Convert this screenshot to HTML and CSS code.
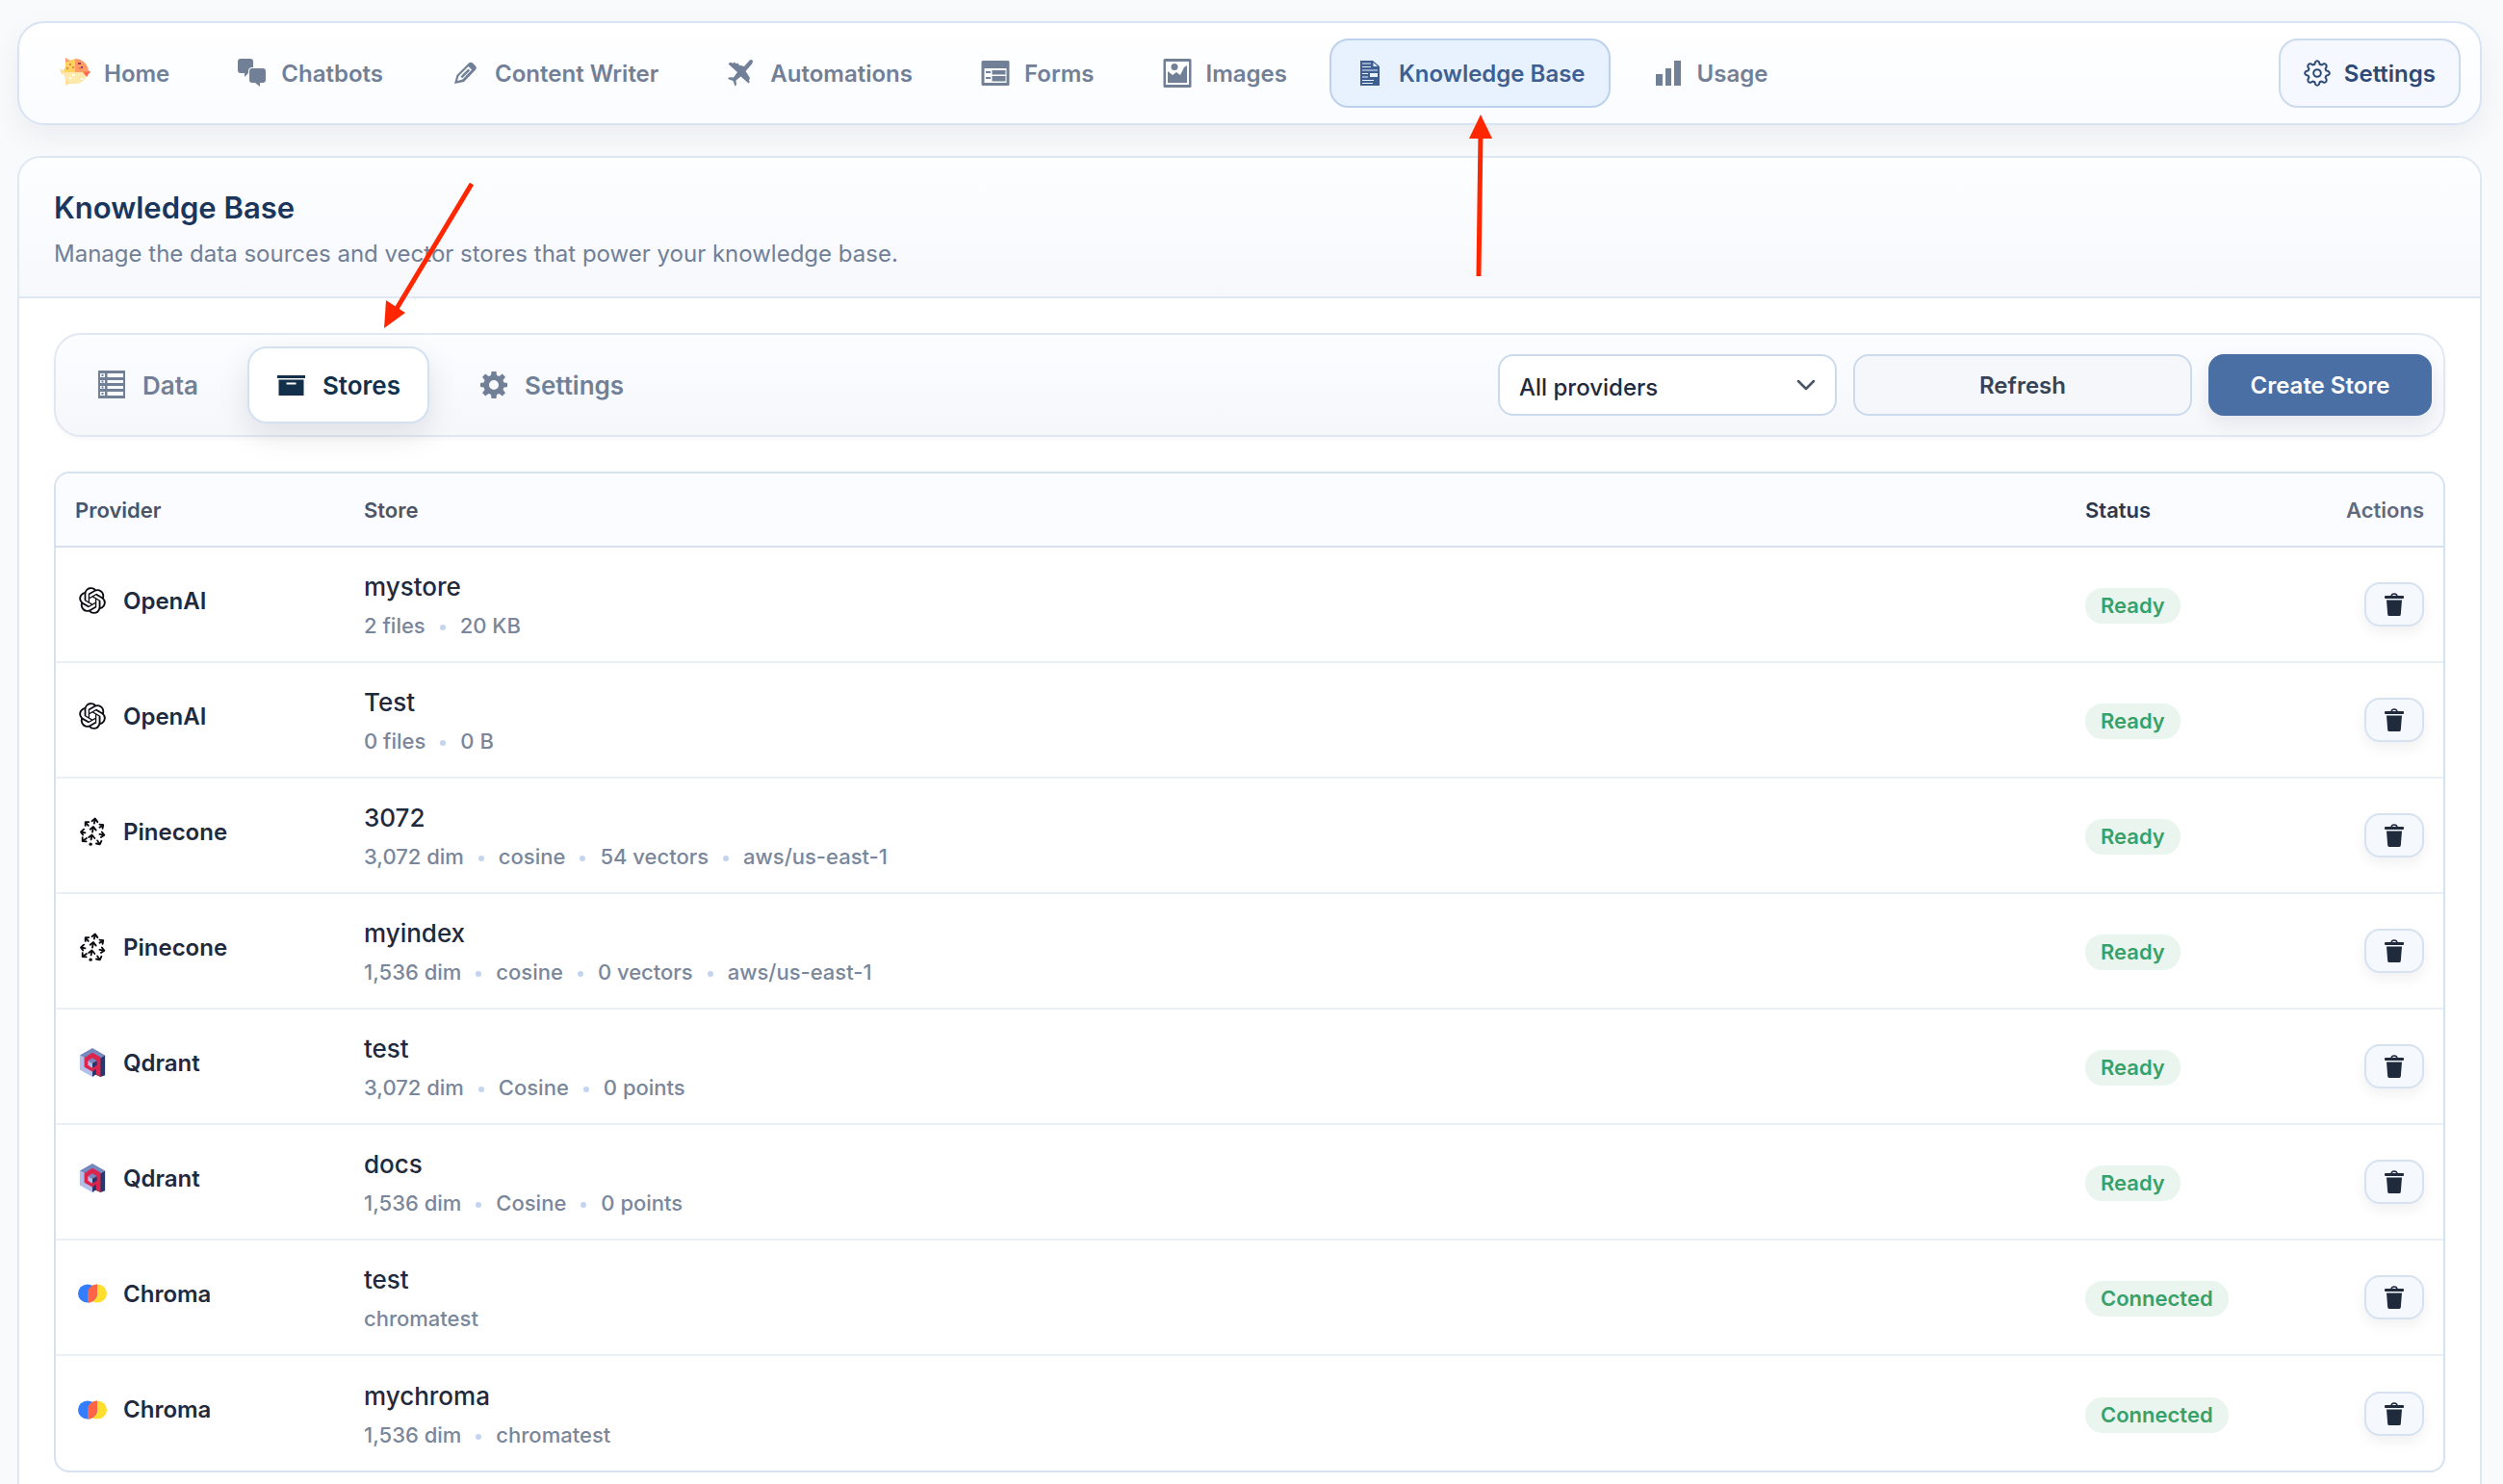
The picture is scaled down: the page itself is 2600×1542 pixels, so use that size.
FILE: index.html
```html
<!DOCTYPE html>
<html lang="en">
<head>
  <meta charset="UTF-8">
  <meta name="viewport" content="width=device-width, initial-scale=1.0">
  <title>Knowledge Base</title>
  <link rel="stylesheet" href="styles.css">
</head>
<body>
  <!-- shared icons -->
  <svg width="0" height="0" class="sprite" aria-hidden="true">
    <symbol id="i-openai" viewBox="-1 -1 26 26">
      <path d="M22.28 9.82a5.98 5.98 0 0 0-.52-4.91 6.05 6.05 0 0 0-6.51-2.9A6.07 6.07 0 0 0 4.98 4.18a5.98 5.98 0 0 0-4 2.9 6.05 6.05 0 0 0 .74 7.1 5.98 5.98 0 0 0 .51 4.91 6.05 6.05 0 0 0 6.52 2.9A5.98 5.98 0 0 0 13.26 24a6.06 6.06 0 0 0 5.77-4.21 5.99 5.99 0 0 0 4-2.9 6.06 6.06 0 0 0-.75-7.07zm-9.02 12.61a4.48 4.48 0 0 1-2.88-1.04l.14-.08 4.78-2.76a.79.79 0 0 0 .39-.68v-6.74l2.02 1.17a.07.07 0 0 1 .04.05v5.58a4.5 4.5 0 0 1-4.49 4.5zM3.6 18.3a4.47 4.47 0 0 1-.53-3.01l.14.09 4.78 2.76a.77.77 0 0 0 .78 0l5.84-3.37v2.33a.08.08 0 0 1-.03.06L9.74 19.95a4.5 4.5 0 0 1-6.14-1.65zM2.34 7.9a4.49 4.49 0 0 1 2.37-1.97V11.6a.77.77 0 0 0 .39.68l5.81 3.35-2.02 1.17a.08.08 0 0 1-.07 0l-4.83-2.79A4.5 4.5 0 0 1 2.34 7.87zm16.6 3.86L13.1 8.36 15.12 7.2a.08.08 0 0 1 .07 0l4.83 2.79a4.49 4.49 0 0 1-.68 8.1v-5.68a.79.79 0 0 0-.4-.65zm2.01-3.02-.14-.09-4.77-2.78a.78.78 0 0 0-.79 0L9.41 9.23V6.9a.07.07 0 0 1 .03-.06l4.83-2.79a4.5 4.5 0 0 1 6.68 4.66zM8.31 12.86l-2.02-1.16a.08.08 0 0 1-.04-.06V6.07a4.5 4.5 0 0 1 7.38-3.45l-.14.08-4.78 2.76a.79.79 0 0 0-.39.68zm1.1-2.36L12 9l2.61 1.5v3L12 15l-2.6-1.5z"/>
    </symbol>
    <symbol id="i-pinecone" viewBox="0 0 28 32">
      <g fill="none" stroke="#0b0b12" stroke-width="2" stroke-linecap="round" stroke-linejoin="round">
        <path d="M16 7l1-5M13.5 4.5l3.5-2.8 2.7 3.8"/>
        <path d="M14 16.5l1-5M11.5 13.5l3.5-2.8 3 3.8"/>
        <path d="M12.5 25l1-5M10 22.5l3.5-2.8 3 3.8"/>
        <path d="M9.5 9.5l-3-3.5M10 5.5H6.2v4"/>
        <path d="M22 11.5l3.5-2.5M22 8.2l4 .6-.8 3.8"/>
        <path d="M6 17.5l-4.5-1M4.5 13.5l-3.3 3 2.3 3.3"/>
        <path d="M22 19l5 .8M24.5 16.5l2.7 3.5-3.7 2.5"/>
        <path d="M7.5 23.5l-4 3M3 22.5v4.2l4.2.3"/>
        <path d="M19.5 26l2.5 4M24 26.5l-1.8 3.7-4-.9"/>
      </g>
      <circle cx="12" cy="30" r="1.8" fill="#0b0b12"/>
    </symbol>
    <symbol id="i-qdrant" viewBox="0 0 28 32">
      <path fill="#7589be" d="M14 0l14 8-14 8L0 8z"/>
      <path fill="#b2bfe8" d="M0 8l14 8v16L0 24z"/>
      <path fill="#24386c" d="M28 8v22l-5 2-9-4V16z"/>
      <path fill="#dc244c" d="M14 5l9 5v22l-5-3v-6l-4 3-9-5V11z"/>
      <path fill="#7589be" d="M14 11l5 3-5 3-5-3z"/>
      <path fill="#b2bfe8" d="M9 14l5 3v5l-5-3z"/>
      <path fill="#24386c" d="M19 14v5l-5 3v-5z"/>
      <path fill="#24386c" d="M14 27l4-2v4l-4 3z"/>
    </symbol>
    <symbol id="i-chroma" viewBox="0 0 30 20">
      <ellipse cx="20" cy="10" rx="10" ry="9.6" fill="#ffde2d"/>
      <ellipse cx="10" cy="10" rx="10" ry="9.6" fill="#327eff"/>
      <path fill="#ff6446" d="M20 .4V10c0 5.3-4.500 9.600-10 9.600V10C10 4.700 14.500.4 20 .4z"/>
    </symbol>
    <symbol id="i-trash" viewBox="0 0 20 24">
      <path fill="none" stroke="currentColor" stroke-width="1.5" d="M7 4a3 3 0 0 1 6 0"/>
      <rect y="3" width="20" height="3" rx="1"/>
      <path d="M2 7.5h16L16.8 22.5a1.6 1.6 0 0 1-1.6 1.5H4.8a1.6 1.6 0 0 1-1.6-1.5z"/>
    </symbol>
  </svg>

  <nav class="navbar">
    <a href="#" class="nav-item">
      <svg class="icon" viewBox="0 0 32 32">
        <path fill="#ffd25e" d="M6 0l4 3 6-2 2 1v14H3l3-7z"/>
        <path fill="#ff9c66" d="M16 1c8 0 13 6 14 12l2 3H16z"/>
        <path fill="#ffe8ac" d="M3 15h25c0 7-5 12-11 12H6v-5z"/>
        <path fill="#ffdfa0" d="M0 11l5 3-3 4zM6 24l6 2-6 3z"/>
        <path fill="#ff6a4d" d="M24 15l8-1-4 6z"/>
        <path fill="#ff9a7a" d="M6 0l5 3-5 2z"/>
        <path fill="#8e3b70" d="M19 5h3v2h-3zM22 9h2v2h-2z"/>
        <path fill="#f0804c" d="M10 6h2v2h-2zM13 9h2v2h-2zM7 10h2v2H7zM20 10h2v2h-2z"/>
        <path fill="#fff" d="M13 17h3v2h-3zM10 20h2v2h-2zM22 21h2v2h-2z"/>
      </svg>
      Home
    </a>
    <a href="#" class="nav-item">
      <svg class="icon" viewBox="0 0 32 32">
        <path d="M4 1h10a3 3 0 0 1 3 3v6h-1a4 4 0 0 0-4 4v2l-4 4v-4H4a3 3 0 0 1-3-3V4a3 3 0 0 1 3-3z"/>
        <path d="M16 11h11a3 3 0 0 1 3 3v9a3 3 0 0 1-3 3h-3v4l-5-4h-3a3 3 0 0 1-3-3v-9a3 3 0 0 1 3-3z"/>
      </svg>
      Chatbots
    </a>
    <a href="#" class="nav-item">
      <svg class="icon" viewBox="0 0 32 32">
        <path fill-rule="evenodd" d="M19 5.500q2-1.500 4 0l3 3q1.500 2 0 4L14 25 4 27l2.500-9zM8.500 19l-1.500 5 5.500-1.500L22 12.500 18.500 9zM10.500 19.500l8-8 1.700 1.700-8 8z"/>
      </svg>
      Content Writer
    </a>
    <a href="#" class="nav-item">
      <svg class="icon" viewBox="0 0 32 32">
        <path d="M27 2.200q2 .8 0 4.300l-6.500 7.500L25 21l-1 2.500.8 1.500-1.300 1.500-8-7-5 4 .5 4.500-1.500 1.500L7.500 24l-5.500-2 1.500-1.800 4.500.3 4-5.500L2.500 6.500 4.500 4.800l3 1L9 4.500l1.500 1.800 2-.8 1 2 5.500 1.500 4-4.500q2.500-3 4-2.300z"/>
      </svg>
      Automations
    </a>
    <a href="#" class="nav-item">
      <svg class="icon" viewBox="0 0 32 32">
        <path fill-rule="evenodd" d="M3 3h26a1.500 1.500 0 0 1 1.500 1.500v23A1.500 1.500 0 0 1 29 29H3a1.500 1.500 0 0 1-1.500-1.500v-23A1.500 1.500 0 0 1 3 3zM4.500 11v15h23V11z"/>
        <path d="M6 14h5v2H6zM6 20h5v2H6zM12.500 13h14v4.500h-14zM12.500 19h14v5.500h-14z"/>
      </svg>
      Forms
    </a>
    <a href="#" class="nav-item">
      <svg class="icon" viewBox="0 0 32 32">
        <path fill-rule="evenodd" d="M3 1h26a1.500 1.500 0 0 1 1.500 1.500v27A1.500 1.500 0 0 1 29 31H3a1.500 1.500 0 0 1-1.500-1.500v-27A1.500 1.500 0 0 1 3 1zM4 4v24h24V4z"/>
        <circle cx="13" cy="9.500" r="3.500"/>
        <path d="M6 26V14l5 4 4-3 4 3 4-8 3-2v18z"/>
      </svg>
      Images
    </a>
    <a href="#" class="nav-item active">
      <svg class="icon" viewBox="0 0 32 32">
        <path fill-rule="evenodd" d="M6 3h13l7 6v20H6zM8 5.500v1h9v-1zM8 9v1h9V9zM19.500 5v4h4.500zM8 12.500v1h16v-1zM8 16v1h6v-1zM16 16v4h8v-4zM8 19.500v1h6v-1zM8 23v1h12v-1zM8 26v1h11v-1z"/>
      </svg>
      Knowledge Base
    </a>
    <a href="#" class="nav-item">
      <svg class="icon" viewBox="0 0 32 32">
        <path d="M3 17h7v12H3zM13 11h6v18h-6zM22 3h7v26h-7z"/>
      </svg>
      Usage
    </a>
    <a href="#" class="nav-item nav-settings">
      <svg class="icon icon-sm" viewBox="0 0 28 28" fill="none">
        <path stroke="currentColor" stroke-width="2" stroke-linejoin="round" d="M12 2.500Q14-.2 16 2.500l.6 2.200 2 .8 2-1.200q3.200-.4 3.100 3.100l-1.200 2 .8 2 2.200.6q2.700 2 0 4l-2.200.6-.8 2 1.200 2q.1 3.500-3.100 3.100l-2-1.200-2 .8-.6 2.200q-2 2.700-4 0l-.6-2.200-2-.8-2 1.200q-3.200.4-3.100-3.100l1.200-2-.8-2L2.500 16q-2.700-2 0-4l2.200-.6.8-2-1.200-2q-.1-3.500 3.100-3.100l2 1.200 2-.8z"/>
        <circle cx="14" cy="14" r="3.800" stroke="currentColor" stroke-width="2"/>
      </svg>
      Settings
    </a>
  </nav>

  <main class="page">
    <header class="page-header">
      <h1>Knowledge Base</h1>
      <p>Manage the data sources and vector stores that power your knowledge base.</p>
    </header>

    <div class="page-body">
      <div class="toolbar">
        <button type="button" class="tab">
          <svg class="icon" viewBox="0 0 32 32">
            <path fill-rule="evenodd" d="M2 1h28v29H2zM4 4v4h5V4zM11.500 4v4H28V4zM4 11v3h5v-3zM11.500 11v3H28v-3zM4 17v3h5v-3zM11.500 17v3H28v-3zM4 23v4h5v-4zM11.500 23v4H28v-4z"/>
            <path d="M5.500 5h2v2h-2zM5.500 11.500h2v2h-2zM5.500 17.500h2v2h-2zM5.500 24h2v2h-2z"/>
          </svg>
          Data
        </button>
        <button type="button" class="tab active">
          <svg class="icon" viewBox="0 0 32 32">
            <path fill-rule="evenodd" d="M1 6h29v3H1zM2.500 10.500h26V27h-26zM10.500 13.500v2h10v-2z"/>
          </svg>
          Stores
        </button>
        <button type="button" class="tab">
          <svg class="icon" viewBox="0 0 32 32">
            <path fill-rule="evenodd" d="M13.500 2h5l.5 4 2.500 1 3.300-2.500 3.200 3.200L25.500 11l1 2.500 3.500.5v4l-3.500.5-1 2.500 2.500 3.300-3.200 3.200-3.300-2.500-2.500 1-.5 4h-5l-.5-4-2.500-1-3.300 2.500L4 24.300 6.500 21l-1-2.500L2 18v-4l3.500-.5 1-2.500L4 7.700l3.200-3.200L10.500 7l2.500-1zM16 11a5 5 0 1 0 0 10 5 5 0 1 0 0-10z"/>
          </svg>
          Settings
        </button>
        <div class="controls">
          <select class="control" aria-label="Provider">
            <option>All providers</option>
            <option>OpenAI</option>
            <option>Pinecone</option>
            <option>Qdrant</option>
            <option>Chroma</option>
          </select>
          <button type="button" class="control btn-refresh">Refresh</button>
          <button type="button" class="control btn-create">Create Store</button>
        </div>
      </div>

      <div class="table-wrap">
        <table>
          <thead>
            <tr>
              <th class="col-provider">Provider</th>
              <th>Store</th>
              <th class="col-status">Status</th>
              <th class="col-actions">Actions</th>
            </tr>
          </thead>
          <tbody>
            <tr>
              <td><div class="provider"><svg class="logo"><use href="#i-openai"/></svg>OpenAI</div></td>
              <td><div class="store">mystore</div><div class="meta"><span>2 files</span><span>20 KB</span></div></td>
              <td><span class="badge">Ready</span></td>
              <td class="actions"><button type="button" class="btn-delete" aria-label="Delete"><svg><use href="#i-trash"/></svg></button></td>
            </tr>
            <tr>
              <td><div class="provider"><svg class="logo"><use href="#i-openai"/></svg>OpenAI</div></td>
              <td><div class="store">Test</div><div class="meta"><span>0 files</span><span>0 B</span></div></td>
              <td><span class="badge">Ready</span></td>
              <td class="actions"><button type="button" class="btn-delete" aria-label="Delete"><svg><use href="#i-trash"/></svg></button></td>
            </tr>
            <tr>
              <td><div class="provider"><svg class="logo"><use href="#i-pinecone"/></svg>Pinecone</div></td>
              <td><div class="store">3072</div><div class="meta"><span>3,072 dim</span><span>cosine</span><span>54 vectors</span><span>aws/us-east-1</span></div></td>
              <td><span class="badge">Ready</span></td>
              <td class="actions"><button type="button" class="btn-delete" aria-label="Delete"><svg><use href="#i-trash"/></svg></button></td>
            </tr>
            <tr>
              <td><div class="provider"><svg class="logo"><use href="#i-pinecone"/></svg>Pinecone</div></td>
              <td><div class="store">myindex</div><div class="meta"><span>1,536 dim</span><span>cosine</span><span>0 vectors</span><span>aws/us-east-1</span></div></td>
              <td><span class="badge">Ready</span></td>
              <td class="actions"><button type="button" class="btn-delete" aria-label="Delete"><svg><use href="#i-trash"/></svg></button></td>
            </tr>
            <tr>
              <td><div class="provider"><svg class="logo"><use href="#i-qdrant"/></svg>Qdrant</div></td>
              <td><div class="store">test</div><div class="meta"><span>3,072 dim</span><span>Cosine</span><span>0 points</span></div></td>
              <td><span class="badge">Ready</span></td>
              <td class="actions"><button type="button" class="btn-delete" aria-label="Delete"><svg><use href="#i-trash"/></svg></button></td>
            </tr>
            <tr>
              <td><div class="provider"><svg class="logo"><use href="#i-qdrant"/></svg>Qdrant</div></td>
              <td><div class="store">docs</div><div class="meta"><span>1,536 dim</span><span>Cosine</span><span>0 points</span></div></td>
              <td><span class="badge">Ready</span></td>
              <td class="actions"><button type="button" class="btn-delete" aria-label="Delete"><svg><use href="#i-trash"/></svg></button></td>
            </tr>
            <tr>
              <td><div class="provider"><svg class="logo"><use href="#i-chroma"/></svg>Chroma</div></td>
              <td><div class="store">test</div><div class="meta"><span>chromatest</span></div></td>
              <td><span class="badge">Connected</span></td>
              <td class="actions"><button type="button" class="btn-delete" aria-label="Delete"><svg><use href="#i-trash"/></svg></button></td>
            </tr>
            <tr>
              <td><div class="provider"><svg class="logo"><use href="#i-chroma"/></svg>Chroma</div></td>
              <td><div class="store">mychroma</div><div class="meta"><span>1,536 dim</span><span>chromatest</span></div></td>
              <td><span class="badge">Connected</span></td>
              <td class="actions"><button type="button" class="btn-delete" aria-label="Delete"><svg><use href="#i-trash"/></svg></button></td>
            </tr>
          </tbody>
        </table>
      </div>
    </div>
  </main>

  <!-- pointers to the active nav item and tab -->
  <svg class="arrow arrow-nav" width="30" height="170" viewBox="0 0 30 170">
    <path d="M13 168L15 20" stroke="#ff2600" stroke-width="5"/>
    <path d="M15 0l12 25H3z" fill="#ff2600"/>
  </svg>
  <svg class="arrow arrow-tab" width="96" height="154" viewBox="0 0 96 154">
    <path d="M92 2L12 135" stroke="#ff2600" stroke-width="5"/>
    <path d="M1 152L3 123l20 13z" fill="#ff2600"/>
  </svg>
</body>
</html>
```

FILE: styles.css
```css
* {
  box-sizing: border-box;
}
body {
  margin: 0;
  padding: 22px 22px 0 18px;
  background-color: #f8fafc;
  font-family: Inter, "Liberation Sans", sans-serif;
  font-size: 24px;
  color: #1f2a3c;
  position: relative;
  overflow: hidden;
}
h1, p {
  margin: 0;
}
button, select {
  font-family: inherit;
  cursor: pointer;
}
svg {
  fill: currentColor;
  flex-shrink: 0;
}
.sprite {
  position: absolute;
}
.icon {
  width: 32px;
  height: 32px;
}
.icon-sm {
  width: 28px;
  height: 28px;
  fill: none;
}

/* top navigation */
.navbar {
  display: flex;
  align-items: center;
  gap: 18px;
  padding: 16px 20px 16px 16px;
  border: 2px solid #d8e4f3;
  border-radius: 28px;
  background: linear-gradient(#ffffff, #fafcff);
  box-shadow: 0 12px 32px rgba(15, 23, 42, 0.06);
}
.nav-item {
  display: flex;
  align-items: center;
  gap: 14px;
  height: 72px;
  padding: 0 24px;
  border: 2px solid transparent;
  border-radius: 20px;
  color: #718096;
  font-weight: 600;
  text-decoration: none;
}
.nav-item.active {
  background-color: #e8f2ff;
  border-color: #bdd1ec;
  color: #3f5f92;
}
.nav-settings {
  margin-left: auto;
  background-color: #f5f8ff;
  border-color: #cbdaec;
  color: #2c4a75;
}

/* page card */
.page {
  margin-top: 32px;
  border: 2px solid #dfe7f2;
  border-radius: 24px 24px 0 0;
  background-color: #fff;
  overflow: hidden;
}
.page-header {
  padding: 34px 36px 28px;
  border-bottom: 2px solid #dfe7f2;
  background: linear-gradient(#fdfeff, #f6f8fc);
}
.page-header h1 {
  font-size: 31px;
  line-height: 36px;
  font-weight: 600;
  color: #1a365d;
}
.page-header p {
  margin-top: 14px;
  line-height: 32px;
  color: #718096;
}
.page-body {
  padding: 36px;
}

/* tabs and filters */
.toolbar {
  display: flex;
  align-items: center;
  gap: 21px;
  padding: 12px;
  border: 2px solid #e2e8f2;
  border-radius: 28px;
  background: linear-gradient(#fcfdff, #f5f7fb);
  box-shadow: 0 2px 4px rgba(15, 23, 42, 0.04);
}
.tab {
  display: flex;
  align-items: center;
  gap: 16px;
  height: 80px;
  padding: 0 28px;
  border: 2px solid transparent;
  border-radius: 20px;
  background: none;
  color: #718096;
  font-size: 26px;
  font-weight: 600;
}
.tab.active {
  background-color: #fff;
  border-color: #d3e1f1;
  color: #12304a;
  box-shadow: 0 12px 32px rgba(15, 23, 42, 0.1);
}
.controls {
  display: flex;
  gap: 17px;
  margin-left: auto;
}
.control {
  width: 352px;
  height: 64px;
  border: 2px solid #cbdaec;
  border-radius: 16px;
  font-size: 24px;
  font-weight: 600;
}
select.control {
  appearance: none;
  padding: 4px 20px 0;
  background: #fff url("data:image/svg+xml,%3Csvg xmlns='http://www.w3.org/2000/svg' width='20' height='12' fill='none' stroke='%234a5568' stroke-width='2.5' stroke-linecap='round' stroke-linejoin='round'%3E%3Cpath d='M2 2l8 8 8-8'/%3E%3C/svg%3E") no-repeat right 20px center;
  color: #1f2a3c;
  font-weight: 500;
}
.btn-refresh {
  background-color: #f5f7fb;
  color: #374357;
}
.btn-create {
  width: 232px;
  border: none;
  background-color: #4a6fa5;
  color: #fff;
  box-shadow: 0 8px 20px rgba(15, 23, 42, 0.08);
}

/* stores table */
.table-wrap {
  margin-top: 36px;
  border: 2px solid #d6e2f0;
  border-radius: 16px;
  overflow: hidden;
}
table {
  width: 100%;
  border-collapse: separate;
  border-spacing: 0;
  table-layout: fixed;
}
th {
  height: 77px;
  padding: 0 20px;
  border-bottom: 2px solid #d6e0ee;
  background-color: #fafcff;
  color: #4a5568;
  font-size: 22px;
  font-weight: 600;
  text-align: left;
}
td {
  height: 120px;
  padding: 0 20px;
  border-bottom: 2px solid #e9f0f8;
}
tr:last-child td {
  height: 119px;
  border-bottom: none;
}
.col-provider {
  width: 300px;
}
.col-status {
  width: 236px;
  color: #2d3748;
}
.col-actions {
  width: 156px;
  color: #5f6b7c;
  text-align: right;
}
.provider {
  display: flex;
  align-items: center;
  gap: 17px;
  padding: 0 0 8px 3px;
  font-weight: 600;
}
.logo {
  width: 30px;
  height: 30px;
  color: #0b0b12;
}
.store {
  padding-top: 4px;
  font-size: 26px;
  line-height: 40px;
  font-weight: 500;
}
.meta {
  display: flex;
  align-items: center;
  font-size: 22px;
  line-height: 40px;
  font-weight: 500;
  color: #7a879b;
}
.meta span + span::before {
  content: "";
  display: inline-block;
  width: 6px;
  height: 6px;
  margin: 0 15px;
  border-radius: 50%;
  background-color: #c3d5ee;
  vertical-align: middle;
}
.badge {
  display: inline-block;
  margin-top: 3px;
  padding: 0 16px;
  border-radius: 18px;
  background-color: #ebf5f0;
  color: #38a169;
  font-size: 22px;
  line-height: 37px;
  font-weight: 600;
}
.actions {
  text-align: right;
}
.btn-delete {
  display: inline-flex;
  align-items: center;
  justify-content: center;
  width: 62px;
  height: 46px;
  padding: 0;
  border: 2px solid #d6e2f2;
  border-radius: 16px;
  background-color: #f5f8fd;
  color: #1f2a3c;
  box-shadow: 0 6px 14px rgba(15, 23, 42, 0.06);
  vertical-align: middle;
}
.btn-delete svg {
  width: 20px;
  height: 24px;
}

/* arrows drawn over the page */
.arrow {
  position: absolute;
}
.arrow-nav {
  left: 1523px;
  top: 119px;
}
.arrow-tab {
  left: 398px;
  top: 189px;
}
```
